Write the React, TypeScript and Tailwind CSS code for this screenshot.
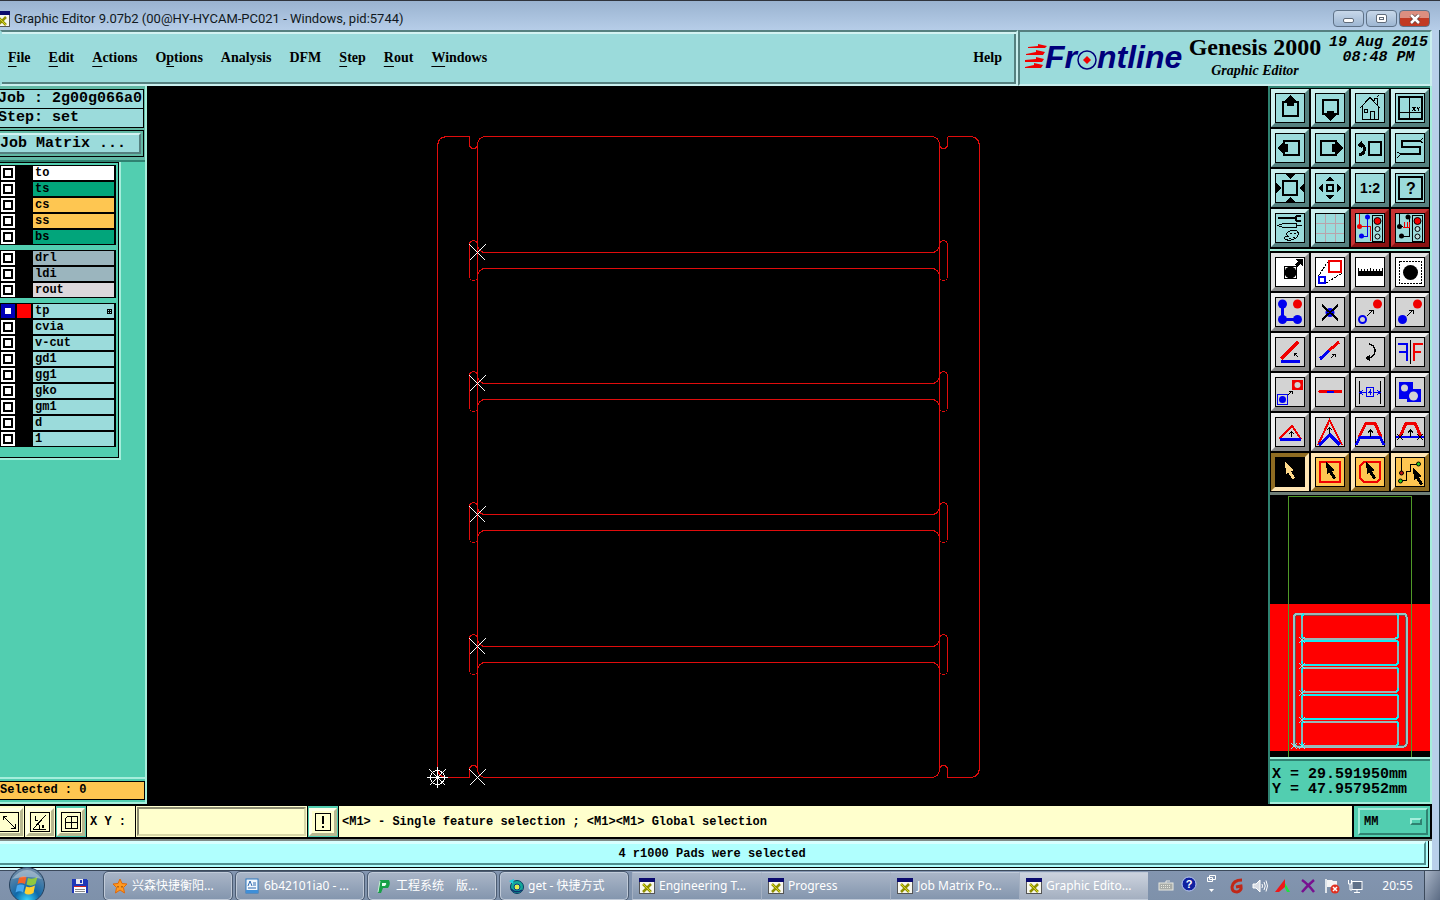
import React from 'react'

type Kids = { children?: React.ReactNode }

const BLUE = '#0000f0'
const RED = '#f00000'

/* ---------- tool icons, drawn on a 30 x 30 grid ---------- */

function Cursor({ x = 0, y = 0, fill = '#000' }: { x?: number; y?: number; fill?: string }) {
  return (
    <polygon
      transform={`translate(${x} ${y})`}
      points="10,5 11,17 13,15 17,22 20,21 16,14 19,13"
      fill={fill}
    />
  )
}

function ArrowUp() {
  return <path d="M15.500 20V13M13 15.500L15.500 13L18 15.500" stroke="#000" fill="none" />
}

function SmallArrow({ x, y }: { x: number; y: number }) {
  return <path transform={`translate(${x} ${y})`} d="M0 6L6 0M2 0H6V4" stroke="#000" fill="none" />
}

function TrafficLight() {
  return (
    <>
      <rect x="17.500" y="2.500" width="10" height="26" fill="none" stroke="#000" />
      <circle cx="22.500" cy="8" r="3.500" fill={RED} stroke="#000" />
      <circle cx="22.500" cy="16" r="2.500" fill="#b9dcdc" stroke="#000" />
      <circle cx="22.500" cy="23.500" r="2.500" fill="#b9dcdc" stroke="#000" />
    </>
  )
}

const viewTools: { label: string; alert?: boolean; icon: React.ReactNode }[] = [
  {
    label: 'Pan up',
    icon: (
      <>
        <rect x="8" y="9" width="15" height="14" fill="none" stroke="#000" strokeWidth="2" />
        <path d="M15.500 2L21 8H19V13H12V8H10Z" />
      </>
    ),
  },
  {
    label: 'Pan down',
    icon: (
      <>
        <rect x="8" y="7" width="15" height="14" fill="none" stroke="#000" strokeWidth="2" />
        <path d="M15.500 28L21 22H19V18H12V22H10Z" />
      </>
    ),
  },
  {
    label: 'Home',
    icon: (
      <path
        d="M5 15L15 4.500L25 15M7.500 13V26.500H23.500V13M9.500 16.500H12.500V19.500H9.500ZM15.500 26V18.500H19.500V26M19.500 8V5.500H22.500V12M22 4L24 2"
        fill="none"
        stroke="#000"
      />
    ),
  },
  {
    label: 'Coordinates view',
    icon: (
      <>
        <rect x="4" y="4" width="23" height="22" fill="none" stroke="#000" strokeWidth="2" />
        <path d="M14.500 4V26M4 19.500H27" stroke="#000" />
        <path d="M17.500 14L20.500 18M20.500 14L17.500 18M22 14L23.500 16L25 14M23.500 16V18" stroke="#000" fill="none" />
      </>
    ),
  },
  {
    label: 'Pan left',
    icon: (
      <>
        <rect x="9" y="8" width="15" height="14" fill="none" stroke="#000" strokeWidth="2" />
        <path d="M2 15L8 9V11H13V19H8V21Z" />
      </>
    ),
  },
  {
    label: 'Pan right',
    icon: (
      <>
        <rect x="6" y="8" width="15" height="14" fill="none" stroke="#000" strokeWidth="2" />
        <path d="M28 15L22 9V11H17V19H22V21Z" />
      </>
    ),
  },
  {
    label: 'Previous view',
    icon: (
      <>
        <rect x="14" y="9" width="12" height="13" fill="none" stroke="#000" strokeWidth="2" />
        <path d="M4 21H7Q10 19 9 14Q8 11 5 12" fill="none" stroke="#000" strokeWidth="3" />
        <path d="M2 12L7 7V15Z" />
      </>
    ),
  },
  {
    label: 'Snake view',
    icon: (
      <>
        <path d="M25 8H7V14H25V21H6" fill="none" stroke="#000" strokeWidth="2" />
        <path d="M25 8L28 5M25 8L28 10M6 21L2 19M6 21L2 25" stroke="#000" />
      </>
    ),
  },
  {
    label: 'Zoom in',
    icon: (
      <>
        <rect x="8" y="8" width="14" height="14" fill="none" stroke="#000" strokeWidth="2" />
        <path d="M10 1H20L15 6ZM10 29H20L15 24ZM1 10V20L6 15ZM29 10V20L24 15Z" />
      </>
    ),
  },
  {
    label: 'Zoom out',
    icon: (
      <>
        <rect x="12" y="12" width="6" height="6" fill="none" stroke="#000" strokeWidth="2" />
        <path d="M10 8H20L15 4ZM10 22H20L15 26ZM8 10V20L4 15ZM22 10V20L26 15Z" />
      </>
    ),
  },
  {
    label: 'Scale one to two',
    icon: (
      <text x="15" y="20" textAnchor="middle" fontSize="14" fontWeight="bold" fontFamily="Liberation Sans, sans-serif">
        1:2
      </text>
    ),
  },
  {
    label: 'Query',
    icon: (
      <>
        <rect x="4" y="4" width="23" height="22" fill="none" stroke="#000" strokeWidth="2" />
        <text x="16" y="21" textAnchor="middle" fontSize="16" fontWeight="bold" fontFamily="Liberation Sans, sans-serif">
          ?
        </text>
      </>
    ),
  },
  {
    label: 'Options',
    icon: (
      <>
        <path d="M3 5H20" stroke="#000" strokeWidth="2" />
        <path d="M26 3H22L20 5L22 8H26" fill="none" stroke="#000" strokeWidth="2" />
        <path d="M3 12.500L8 10.500H21V14.500H8ZM21 12.500H27" fill="none" stroke="#000" />
        <path d="M11 21Q15 16 22 18Q25 21 21 25Q15 29 10 26Q9 23 13 23Z" fill="none" stroke="#000" />
        <path d="M15 20.500H17M19 20.500H21M18 24.500H20M14 25.500H16" stroke="#000" />
      </>
    ),
  },
  {
    label: 'Grid',
    icon: <path d="M10.500 1V29M20.500 1V29M1 10.500H29M1 20.500H29" stroke="#b9a3ab" />,
  },
  {
    label: 'Net reference',
    alert: true,
    icon: (
      <>
        <path d="M4.500 1V13.500H15.500V28" fill="none" stroke={RED} />
        <path d="M12.500 4V23H6" fill="none" stroke={BLUE} />
        <circle cx="4.500" cy="13.500" r="2.500" fill={RED} />
        <circle cx="12.500" cy="4" r="2.500" fill={BLUE} />
        <circle cx="6.500" cy="23" r="2.500" fill={BLUE} />
        <TrafficLight />
      </>
    ),
  },
  {
    label: 'Net compare',
    alert: true,
    icon: (
      <>
        <path d="M4.500 1V13M14.500 4V23H7M4.500 13H8" fill="none" stroke="#000" />
        <path d="M8 14H15M9.500 9V14M12.500 9V14M14.500 9V14" stroke={RED} />
        <circle cx="4.500" cy="13.500" r="2.500" />
        <circle cx="13" cy="4" r="2.500" />
        <circle cx="6.500" cy="23" r="2.500" />
        <TrafficLight />
      </>
    ),
  },
]

const editTools: { label: string; tone: 'white' | 'gray' | 'orange' | 'active'; icon: React.ReactNode }[] = [
  {
    label: 'Select feature',
    tone: 'white',
    icon: (
      <>
        <rect x="9.500" y="9.500" width="12" height="12" fill="none" stroke="#000" />
        <circle cx="15.500" cy="15.500" r="6" />
        <path d="M21 9L25 5" stroke="#000" strokeWidth="3" />
        <path d="M20 2H28V9Z" />
      </>
    ),
  },
  {
    label: 'Transform feature',
    tone: 'white',
    icon: (
      <>
        <path d="M3.500 19L14 3M11 26L27 16" stroke="#000" strokeDasharray="2 1" />
        <rect x="14" y="4" width="12" height="11" fill="none" stroke={RED} strokeWidth="2" />
        <rect x="4" y="20" width="6" height="6" fill="none" stroke={BLUE} strokeWidth="2" />
      </>
    ),
  },
  {
    label: 'Measure',
    tone: 'white',
    icon: (
      <>
        <rect x="3" y="14" width="25" height="5" />
        <path d="M3.500 11V15M6.500 12V15M9.500 12V15M12.500 12V15M15.500 11V15M18.500 12V15M21.500 12V15M24.500 12V15M27.500 11V15" stroke="#000" />
      </>
    ),
  },
  {
    label: 'Select in area',
    tone: 'white',
    icon: (
      <>
        <rect x="4.500" y="4.500" width="22" height="22" fill="none" stroke="#000" strokeDasharray="2 1" />
        <circle cx="15.500" cy="15.500" r="7.500" />
      </>
    ),
  },
  {
    label: 'Connect',
    tone: 'gray',
    icon: (
      <>
        <path d="M7.500 7V22.500H22" fill="none" stroke={BLUE} strokeWidth="3" />
        <circle cx="7.500" cy="7" r="4.500" fill={BLUE} />
        <circle cx="7.500" cy="22.500" r="4.500" fill={BLUE} />
        <circle cx="22.500" cy="22.500" r="4.500" fill={BLUE} />
        <circle cx="22.500" cy="7" r="4.500" fill={RED} />
      </>
    ),
  },
  {
    label: 'Delete',
    tone: 'gray',
    icon: (
      <>
        <circle cx="15" cy="15.500" r="4.500" fill={BLUE} />
        <path d="M7 8L23 23M23 8L7 23" stroke="#000" strokeWidth="2" />
      </>
    ),
  },
  {
    label: 'Copy',
    tone: 'gray',
    icon: (
      <>
        <circle cx="7.500" cy="22.500" r="3.500" fill="none" stroke={BLUE} strokeWidth="2" />
        <circle cx="22.500" cy="7" r="4.500" fill={RED} />
        <SmallArrow x={12} y={13} />
      </>
    ),
  },
  {
    label: 'Move',
    tone: 'gray',
    icon: (
      <>
        <circle cx="7.500" cy="22.500" r="4.500" fill={BLUE} />
        <circle cx="22.500" cy="7" r="4.500" fill={RED} />
        <SmallArrow x={12} y={13} />
      </>
    ),
  },
  {
    label: 'Rotate',
    tone: 'gray',
    icon: (
      <>
        <path d="M23 5L6 22" stroke={RED} strokeWidth="3" />
        <path d="M6 24.500H25" stroke={BLUE} strokeWidth="3" />
        <path d="M23 20L19 16M19 19V16H22" stroke="#000" fill="none" />
      </>
    ),
  },
  {
    label: 'Stretch line',
    tone: 'gray',
    icon: (
      <>
        <path d="M5 22L14 13.500" stroke={BLUE} strokeWidth="3" />
        <path d="M14 13.500L24 5" stroke={RED} strokeWidth="3" />
        <path d="M16 21L20 17M17 17H20V20" stroke="#000" fill="none" />
      </>
    ),
  },
  {
    label: 'Turn',
    tone: 'gray',
    icon: (
      <>
        <path d="M14 7Q20 8 20 14Q20 20 13 21" fill="none" stroke="#000" strokeWidth="1.500" />
        <path d="M10 21L15 18V24Z" />
      </>
    ),
  },
  {
    label: 'Mirror',
    tone: 'gray',
    icon: (
      <>
        <path d="M3 7H12V24M4 15H12" fill="none" stroke={BLUE} strokeWidth="2" />
        <path d="M28 7H19V24M26 15H19" fill="none" stroke={RED} strokeWidth="2" />
        <path d="M15.500 3V27" stroke="#000" />
      </>
    ),
  },
  {
    label: 'Copy to layer',
    tone: 'gray',
    icon: (
      <>
        <rect x="17" y="3" width="11" height="10" fill={RED} />
        <circle cx="22.500" cy="8" r="3" fill="#d3d3d3" />
        <rect x="2.500" y="17.500" width="10" height="10" fill="none" stroke={BLUE} />
        <circle cx="7.500" cy="22.500" r="3.500" fill={BLUE} />
        <path d="M13 18L17 14M14 14H17V17" stroke="#000" fill="none" />
      </>
    ),
  },
  {
    label: 'Split line',
    tone: 'gray',
    icon: (
      <>
        <path d="M5 14.500H26" stroke={RED} strokeWidth="3" strokeLinecap="round" />
        <path d="M12 14.500H19" stroke={BLUE} strokeWidth="2" />
      </>
    ),
  },
  {
    label: 'Spacing',
    tone: 'gray',
    icon: (
      <>
        <path d="M4.500 4V27M25.500 4V27" stroke="#000" />
        <rect x="11.500" y="10.500" width="7" height="9" fill="none" stroke={BLUE} />
        <path d="M5 15.500H11M19 15.500H25M8 13L5 15.500L8 18M22 13L25 15.500L22 18M16 12L14 15.500H17M15.500 14V18" fill="none" stroke={BLUE} />
      </>
    ),
  },
  {
    label: 'Merge shapes',
    tone: 'gray',
    icon: (
      <>
        <rect x="4" y="5" width="14" height="17" fill={BLUE} />
        <rect x="12" y="12" width="14" height="13" fill={BLUE} />
        <circle cx="9.500" cy="11" r="3.500" fill="#d3d3d3" />
        <circle cx="18.500" cy="19" r="4.500" fill="#d3d3d3" />
      </>
    ),
  },
  {
    label: 'Raise corner',
    tone: 'gray',
    icon: (
      <>
        <path d="M4 22L17 9L26 22" fill="none" stroke={RED} strokeWidth="2" />
        <path d="M5 22.500H26" stroke={BLUE} strokeWidth="3" />
        <path d="M16.500 20V15M14 17L16.500 15L19 17" stroke="#000" fill="none" />
      </>
    ),
  },
  {
    label: 'Stretch corner',
    tone: 'gray',
    icon: (
      <>
        <path d="M3 28L14.500 3L27 28" fill="none" stroke={RED} strokeWidth="2" />
        <path d="M4 28L15 18L25 28" fill="none" stroke={BLUE} strokeWidth="3" />
        <path d="M14.500 17V11M12 13L14.500 11L17 13" stroke="#000" fill="none" />
      </>
    ),
  },
  {
    label: 'Raise segment',
    tone: 'gray',
    icon: (
      <>
        <path d="M4 20L11 6H20L26 20" fill="none" stroke={RED} strokeWidth="3" />
        <path d="M1 28L5 20H25L29 28" fill="none" stroke={BLUE} strokeWidth="3" />
        <ArrowUp />
      </>
    ),
  },
  {
    label: 'Move segment',
    tone: 'gray',
    icon: (
      <>
        <path d="M5 20L11 6H20L26 20" fill="none" stroke={RED} strokeWidth="3" />
        <path d="M1 20H29" stroke={BLUE} strokeWidth="2" />
        <path d="M2 17L8 23M8 17L2 23M22 17L28 23M28 17L22 23" stroke="#000" />
        <ArrowUp />
      </>
    ),
  },
  { label: 'Pointer', tone: 'active', icon: <Cursor fill="#ffd98a" /> },
  {
    label: 'Rectangle select',
    tone: 'orange',
    icon: (
      <>
        <rect x="5" y="5" width="20" height="20" fill="none" stroke={RED} strokeWidth="2" />
        <Cursor x={1} />
      </>
    ),
  },
  {
    label: 'Polygon select',
    tone: 'orange',
    icon: (
      <>
        <path d="M9 5H25V22L22 25H9L5 21V9Z" fill="none" stroke={RED} strokeWidth="2" />
        <Cursor x={1} />
      </>
    ),
  },
  {
    label: 'Net select',
    tone: 'orange',
    icon: (
      <>
        <path d="M6.500 0V16M23 7.500H15.500V14.500H11.500V23.500H5" fill="none" stroke="#000" />
        <circle cx="6.500" cy="16" r="2" fill="#c01010" stroke="#000" />
        <circle cx="23.500" cy="7" r="2" fill="#20d020" stroke="#000" />
        <circle cx="5.500" cy="24" r="2" fill="#20d020" stroke="#000" />
        <Cursor x={8} y={6} />
      </>
    ),
  },
]

const toneClass = {
  white: 'bg-white border-t-[#e4e4e4] border-l-[#e4e4e4] border-b-[#8c8c8c] border-r-[#8c8c8c]',
  gray: 'bg-[#d3d3d3] border-t-[#f0f0f0] border-l-[#f0f0f0] border-b-[#8a8a8a] border-r-[#8a8a8a]',
  orange: 'bg-[#fec651] border-t-[#ffe6b4] border-l-[#ffe6b4] border-b-[#8f6c22] border-r-[#8f6c22]',
  active: 'bg-black border-t-[#8f6c22] border-l-[#8f6c22] border-b-[#ffe6b4] border-r-[#ffe6b4]',
}

function ToolButton({ label, tone, framed = true, children }: Kids & { label: string; tone: string; framed?: boolean }) {
  return (
    <button type="button" aria-label={label} title={label} className={`size-[38px] border-4 ${tone}`}>
      <svg viewBox="0 0 30 30" className="block size-[30px] [&_circle]:[shape-rendering:auto]" shapeRendering="crispEdges">
        {framed && <rect x="0.500" y="0.500" width="29" height="29" fill="none" stroke="#000" />}
        {children}
      </svg>
    </button>
  )
}

/* ---------- window chrome ---------- */

function XIcon({ className }: { className: string }) {
  return (
    <svg viewBox="0 0 16 16" className={className}>
      <rect x="0.500" y="0.500" width="15" height="15" fill="#f7f7ee" stroke="#555" />
      <rect x="0" y="0" width="16" height="4" fill="#0a0a6e" />
      <path d="M4 6L12 14M12 6L4 14" stroke="#8f8f00" strokeWidth="2.500" />
      <path d="M4 6L12 14" stroke="#d8d820" strokeWidth="1" />
    </svg>
  )
}

function TitleBar() {
  const base = 'flex h-[17px] w-[31px] items-center justify-center rounded-sm border border-[#5f7288]'
  return (
    <div className="flex h-[30px] shrink-0 items-start justify-between border-t border-[#30343c] bg-linear-to-b from-[#9ab3d0] to-[#b6cde8]">
      <div className="flex items-center pt-2">
        <XIcon className="-ml-1.5 size-4" />
        <span className="ml-1 font-['Roboto','Noto_Sans',sans-serif] text-[13px] leading-5 text-[#101820]">
          Graphic Editor 9.07b2 (00@HY-HYCAM-PC021 - Windows, pid:5744)
        </span>
      </div>
      <div className="flex gap-0.5 pt-[9px] pr-[10px]">
        <button type="button" aria-label="Minimize" className={`${base} bg-linear-to-b from-[#c8d8ea] to-[#9db6d2]`}>
          <span className="mt-1 h-[5px] w-[11px] rounded-xs border border-[#5f6b7a] bg-white" />
        </button>
        <button type="button" aria-label="Maximize" className={`${base} bg-linear-to-b from-[#c8d8ea] to-[#9db6d2]`}>
          <span className="flex h-[9px] w-[11px] items-center justify-center rounded-xs border border-[#5f6b7a] bg-white">
            <span className="h-[3px] w-[5px] border border-[#5f6b7a]" />
          </span>
        </button>
        <button type="button" aria-label="Close" className={`${base} border-[#5a1d18] bg-linear-to-b from-[#dc8f80] from-45% to-[#c13a24] to-50%`}>
          <svg viewBox="0 0 12 10" className="h-[10px] w-3">
            <path d="M2 1L10 9M10 1L2 9" stroke="#60403c" strokeWidth="4" />
            <path d="M2 1L10 9M10 1L2 9" stroke="#fff" strokeWidth="2.500" />
          </svg>
        </button>
      </div>
    </div>
  )
}

const menus: [string, string, string][] = [
  ['', 'F', 'ile'],
  ['', 'E', 'dit'],
  ['', 'A', 'ctions'],
  ['O', 'p', 'tions'],
  ['Analysis', '', ''],
  ['DFM', '', ''],
  ['', 'S', 'tep'],
  ['', 'R', 'out'],
  ['', 'W', 'indows'],
]

function Logo() {
  return (
    <svg viewBox="0 -7 164 44" className="h-11 w-[164px]" role="img" aria-label="Frontline">
      <g fill="#f00000">
        <path d="M4 4L14 3V1L23 3L21 5H4Z" />
        <path d="M2 11L12 9V7L21 9L19 12H2Z" />
        <path d="M1 17L12 16V14L20 16L18 19H1Z" />
        <path d="M1 24L10 22V20L19 22L17 25H1Z" />
      </g>
      <g fill="#00007b" fontFamily="Liberation Sans, sans-serif" fontWeight="bold" fontStyle="italic" fontSize="32">
        <text x="21" y="25">Fr</text>
        <text x="73" y="25">ntline</text>
      </g>
      <circle cx="63" cy="17" r="9" fill="none" stroke="#00007b" strokeWidth="1.500" />
      <path d="M63 13L67 17L63 21L59 17Z" fill="#f00000" />
    </svg>
  )
}

function Header() {
  return (
    <header className="flex h-14 shrink-0 font-['Liberation_Serif',serif] text-black">
      <nav className="flex flex-1 items-center justify-between border-2 border-t-[#55807f] border-r-[#c9efee] border-b-[#c9efee] border-l-[#9bdbdb] bg-[#9bdbdb] pb-0.5 shadow-[inset_0_2px_0_#d3f2f1,inset_-2px_-2px_0_#55807f]">
        <ul className="flex gap-[18px] pl-1.5 text-[14px] font-bold">
          {menus.map(([a, b, c]) => (
            <li key={a + b + c}>
              <button type="button">
                {a}
                {b && <span className="underline decoration-1 underline-offset-4">{b}</span>}
                {c}
              </button>
            </li>
          ))}
        </ul>
        <button type="button" className="pr-3.5 text-[14px] font-bold">Help</button>
      </nav>
      <div className="flex w-[414px] items-start border-2 border-t-[#55807f] border-r-[#c9efee] border-b-[#c9efee] border-l-[#55807f] bg-[#9bdbdb] pl-1">
        <div className="w-40 shrink-0 pt-1">
          <Logo />
        </div>
        <div className="w-[142px] shrink-0 pt-px text-center">
          <h1 className="text-[24px] leading-7 font-bold whitespace-nowrap">Genesis 2000</h1>
          <p className="text-[14px] leading-5 font-bold italic">Graphic Editor</p>
        </div>
        <p className="pt-[3px] pl-[3px] text-center font-['Liberation_Mono',monospace] text-[15px] leading-[15px] font-bold whitespace-nowrap italic">
          19 Aug 2015
          <br />
          08:48 PM
        </p>
      </div>
    </header>
  )
}

/* ---------- layer list ---------- */

type Layer = { name: string; color: string; active?: boolean }

const layerGroups: Layer[][] = [
  [
    { name: 'to', color: 'bg-white' },
    { name: 'ts', color: 'bg-[#02a57b]' },
    { name: 'cs', color: 'bg-[#fec651]' },
    { name: 'ss', color: 'bg-[#fec651]' },
    { name: 'bs', color: 'bg-[#02a57b]' },
  ],
  [
    { name: 'drl', color: 'bg-[#9bb5be]' },
    { name: 'ldi', color: 'bg-[#9bb5be]' },
    { name: 'rout', color: 'bg-[#dcd8dc]' },
  ],
  [
    { name: 'tp', color: 'bg-[#9bdbdb]', active: true },
    ...['cvia', 'v-cut', 'gd1', 'gg1', 'gko', 'gm1', 'd', '1'].map((name) => ({ name, color: 'bg-[#9bdbdb]' })),
  ],
]

function LayerRow({ name, color, active }: Layer) {
  return (
    <li className="flex h-4 items-center gap-0.5 pr-0.5 pl-px">
      <input
        type="checkbox"
        id={`layer-${name}`}
        defaultChecked={active}
        className={`size-[14px] shrink-0 appearance-none border-2 bg-white ${
          active ? 'border-[#0000b8] shadow-[inset_0_0_0_2px_#0000b8]' : 'border-white shadow-[inset_0_0_0_2px_#000]'
        }`}
      />
      <span className={`size-[14px] shrink-0 ${active ? 'bg-[#ff0000]' : 'bg-black'}`} />
      <label htmlFor={`layer-${name}`} className={`flex h-[14px] flex-1 items-center justify-between pr-0.5 pl-0.5 leading-[14px] ${color}`}>
        {name}
        {active && (
          <svg viewBox="0 0 5 5" className="size-[5px]" shapeRendering="crispEdges">
            <path d="M0.500 0.500H4.500V4.500H0.500ZM2.500 0V5M0 2.500H5" fill="none" stroke="#000" />
          </svg>
        )}
      </label>
    </li>
  )
}

function LeftPanel() {
  return (
    <aside className="flex w-[147px] shrink-0 flex-col border-r-2 border-[#a5eedb] bg-[#52ceb0] font-['Liberation_Mono',monospace] font-bold text-black">
      <div className="bg-[#62b8a4] pt-[3px] pr-px pb-[3px]">
        <div className="border-y border-r border-black bg-[#9bdbdb] text-[15px] leading-[18px] whitespace-pre">
          <p className="-ml-0.5 border-b border-black">Job : 2g00g066a0</p>
          <p className="-ml-0.5">Step: set</p>
        </div>
        <div className="mt-0.5 border-y border-r border-black p-0.5 pl-0">
          <button
            type="button"
            className="block w-full border-y-2 border-r-2 border-t-[#d3f2f1] border-r-[#55807f] border-b-[#55807f] bg-[#9bdbdb] text-left text-[15px] leading-[17px]"
          >
            Job Matrix ...
          </button>
        </div>
      </div>
      <div className="h-0.5 bg-[#2f8271]" />
      <div className="w-[121px] border-r-2 border-b-2 border-[#a5eedb]">
        <div className="flex flex-col gap-[5px] border-t border-r border-b border-black pt-0.5 pr-0.5 pb-2.5">
          {layerGroups.map((group) => (
            <ul key={group[0].name} className="bg-black text-[12px]">
              {group.map((layer) => (
                <LayerRow key={layer.name} {...layer} />
              ))}
            </ul>
          ))}
        </div>
      </div>
      <div className="mt-auto border-t-2 border-b-2 border-[#a5eedb] bg-[#52ceb0] py-0.5">
        <p className="border-y border-r border-black bg-[#fec651] text-[12px] leading-[17px] whitespace-pre">Selected : 0</p>
      </div>
    </aside>
  )
}

/* ---------- drawing canvas ---------- */

const rails = [252.5, 383.5, 514.5, 646.5]
const markers = [252.5, 383.5, 514.5, 646.5, 777.5]

function BoardCanvas() {
  return (
    <div className="min-w-0 flex-1 bg-black">
      <svg viewBox="147 86 1121 718" className="block size-full" shapeRendering="crispEdges" role="img" aria-label="Panel outline">
        <g fill="none" stroke="#e00c0c">
          <path d="M469.500 136.500H448Q437.500 136.500 437.500 147V767Q437.500 777.500 448 777.500H469.500" />
          <path d="M947.500 136.500H969Q979.500 136.500 979.500 147V767Q979.500 777.500 969 777.500H947.500" />
          <path d="M469.500 136.500V144Q469.500 148.500 473.500 148.500Q477.500 148.500 477.500 144Q478 137 486 136.500H931Q939 137 939.500 144Q939.500 148.500 943.500 148.500Q947.500 148.500 947.500 144V136.500" />
          <path d="M469.500 777.500V770Q469.500 765.500 473.500 765.500Q477.500 765.500 477.500 770Q478 777 486 777.500H931Q939 777 939.500 770Q939.500 765.500 943.500 765.500Q947.500 765.500 947.500 770V777.500" />
          <path d="M477.500 144V770M939.500 144V770" />
          {rails.map((y) => (
            <g key={y}>
              <path d={`M477.5 ${y - 8}Q478 ${y} 486 ${y}H931Q939 ${y} 939.5 ${y - 8}`} />
              <path d={`M477.5 ${y + 24}Q478 ${y + 16} 486 ${y + 16}H931Q939 ${y + 16} 939.5 ${y + 24}`} />
              <rect x="469.500" y={y - 12} width="8" height="40" rx="4" />
              <rect x="939.500" y={y - 12} width="8" height="40" rx="4" />
            </g>
          ))}
        </g>
        <g fill="none" stroke="#fff">
          {markers.map((y) => (
            <path key={y} d={`M469.5 ${y - 8}L485.5 ${y + 8}M485.5 ${y - 8}L469.5 ${y + 8}`} />
          ))}
          <path d="M427 777.500H448M437.500 767V788M429.500 769.500L445.500 785.500M445.500 769.500L429.500 785.500" />
          <circle cx="437.500" cy="777.500" r="7" />
        </g>
      </svg>
    </div>
  )
}

/* ---------- right column ---------- */

const mapCells = [119, 145.5, 172.5, 199.5, 226.5]

function MiniMap() {
  return (
    <svg viewBox="0 0 160 262" preserveAspectRatio="none" className="block h-full w-full bg-black" role="img" aria-label="Overview">
      <rect x="0" y="109" width="160" height="147" fill="#ff0000" />
      <path d="M18.500 262V1.500H141.500V262" fill="none" stroke="#4f9a28" strokeWidth="1" shapeRendering="crispEdges" />
      <g fill="none" shapeRendering="crispEdges">
        <rect x="24" y="119" width="112.500" height="132.500" rx="3" stroke="#7a4a4a" strokeWidth="3" />
        <rect x="24" y="119" width="112.500" height="132.500" rx="3" stroke="#8fc8c8" strokeWidth="2" />
        {mapCells.map((y) => (
          <rect key={y} x="32" y={y} width="96" height="24.500" rx="3" stroke="#18e8f0" strokeWidth="2" />
        ))}
        {mapCells.map((y) => (
          <path key={y} d={`M32 ${y + 5}V${y + 20}M128 ${y + 5}V${y + 20}`} stroke="#8fb4b4" strokeWidth="2" />
        ))}
        <path d="M34 119H126M34 143.500H126M34 172.500H126M34 197H126M34 226.500H126M34 251H126" stroke="#9ab8b8" strokeWidth="2" />
        {[145, 171, 198, 225, 251].map((y) => (
          <path key={y} d={`M29 ${y - 3}L35 ${y + 3}M35 ${y - 3}L29 ${y + 3}`} stroke="#7fe8f0" />
        ))}
        <path d="M21 248L27 254M27 248L21 254" stroke="#7fe8f0" />
      </g>
    </svg>
  )
}

function RightPanel() {
  return (
    <aside className="flex w-[164px] shrink-0 flex-col border-r-2 border-l-2 border-r-[#a5eedb] border-l-[#2f8271] bg-black">
      <div className="grid grid-cols-4 gap-0.5 border-t-2 border-[#2f8271] px-px pt-px pb-0.5">
        {viewTools.map(({ label, alert, icon }) => (
          <ToolButton
            key={label}
            label={label}
            tone={
              alert
                ? 'bg-[#9bdbdb] border-t-[#c83434] border-l-[#c83434] border-b-[#8a1212] border-r-[#8a1212]'
                : 'bg-[#9bdbdb] border-t-[#cdf0ef] border-l-[#cdf0ef] border-b-[#55807f] border-r-[#55807f]'
            }
          >
            {icon}
          </ToolButton>
        ))}
      </div>
      <div className="grid grid-cols-4 gap-0.5 border-t-2 border-[#a5eedb] px-px pt-0.5 pb-px">
        {editTools.map(({ label, tone, icon }) => (
          <ToolButton key={label} label={label} tone={toneClass[tone]} framed={tone !== 'active'}>
            {icon}
          </ToolButton>
        ))}
      </div>
      <div className="h-[3px] bg-[#6f7f78]" />
      <div className="min-h-0 flex-1 basis-0">
        <MiniMap />
      </div>
      <div className="border-t-2 border-b-2 border-t-[#a5eedb] border-b-[#a5eedb]">
        <div className="border-t-2 border-[#2f8271] bg-[#52ceb0] pt-1.5 pb-[5px] pl-0.5 font-['Liberation_Mono',monospace] text-[15px] leading-[15px] font-bold whitespace-pre">
          <p>X = 29.591950mm</p>
          <p>Y = 47.957952mm</p>
        </div>
      </div>
    </aside>
  )
}

/* ---------- bottom bars ---------- */

function CommandIcon({ label, children, snap }: Kids & { label: string; snap?: boolean }) {
  return (
    <div className={`flex shrink-0 items-center border-r border-black ${snap ? 'bg-[#52ceb0] px-px' : 'bg-[#ffffcd] px-px'}`}>
      <button
        type="button"
        aria-label={label}
        className="size-[28px] border-3 border-t-[#ffffe8] border-r-[#b8b890] border-b-[#b8b890] border-l-[#ffffe8] bg-[#ffffcd]"
      >
        <svg viewBox="0 0 20 20" className="mx-auto block size-5" shapeRendering="crispEdges" fill="none" stroke="#000">
          <rect x="0.500" y="0.500" width="19" height="19" />
          {children}
        </svg>
      </button>
    </div>
  )
}

function CommandBar() {
  return (
    <div className="flex h-[35px] shrink-0 overflow-hidden border-y-2 border-black bg-[#ffffcd] font-['Liberation_Mono',monospace] text-[12px] font-bold text-black">
      <div className="-ml-1.5 flex">
        <CommandIcon label="Free angle">
          <path d="M4 4L16 16M4 8V4H8M12 16H16V12" />
        </CommandIcon>
        <CommandIcon label="Measure angle">
          <path d="M3 17H16M3 17L16 3M5 4V8H8M10 17Q10 13 8 12M12 13L14 16M14 13L12 16" />
        </CommandIcon>
        <CommandIcon label="Snap to grid" snap>
          <path d="M4 7L7 4H16V16H4ZM4 10H16M10 4V16" />
        </CommandIcon>
      </div>
      <label htmlFor="xy" className="flex w-12 shrink-0 items-center pl-[3px] whitespace-pre">
        X Y :
      </label>
      <div className="w-[173px] shrink-0 border-x border-black bg-[#ffffcd] p-px">
        <input
          id="xy"
          type="text"
          className="h-full w-full border-2 border-t-[#8c8c70] border-r-[#d8d8a8] border-b-[#d8d8a8] border-l-[#8c8c70] bg-[#ffffcd] px-1 outline-none"
        />
      </div>
      <div className="flex shrink-0 items-center border-r border-black bg-[#52ceb0] px-px">
        <button
          type="button"
          aria-label="Alert"
          className="size-[28px] border-3 border-t-[#ffffe8] border-r-[#b8b890] border-b-[#b8b890] border-l-[#ffffe8] bg-[#ffffcd]"
        >
          <svg viewBox="0 0 20 20" className="mx-auto block size-5" shapeRendering="crispEdges">
            <rect x="2.500" y="1.500" width="15" height="17" fill="none" stroke="#000" />
            <path d="M9 4H11V12H9ZM9 14H11V16H9Z" />
          </svg>
        </button>
      </div>
      <p className="flex min-w-0 flex-1 items-center pl-[3px] whitespace-pre">
        {'<M1> - Single feature selection ; <M1><M1> Global selection'}
      </p>
      <div className="relative w-20 shrink-0 border-x-2 border-black bg-[#52ceb0] p-0.5 pl-1">
        <select
          aria-label="Units"
          className="h-full w-full appearance-none border-2 border-t-[#a5eedb] border-r-[#2f8271] border-b-[#2f8271] border-l-[#a5eedb] bg-[#52ceb0] pl-1"
        >
          <option>MM</option>
          <option>INCH</option>
        </select>
        <span className="pointer-events-none absolute top-3 right-2 h-[7px] w-3 border-2 border-t-[#a5eedb] border-r-[#2f8271] border-b-[#2f8271] border-l-[#a5eedb]" />
      </div>
    </div>
  )
}

function StatusBar() {
  return (
    <div className="h-[31px] shrink-0 border-t-2 border-[#7f8c88] bg-[#e0ffff] pr-[3px]">
      <div className="h-[27px] border-r border-b border-black bg-[#b0fffe]">
        <p className="mr-0.5 flex h-[24px] items-center justify-center border-t-3 border-r-2 border-b-2 border-t-[#d8ffff] border-r-[#4f8f8e] border-b-[#4f8f8e] font-['Liberation_Mono',monospace] text-[12px] font-bold text-black">
          4 r1000 Pads were selected
        </p>
      </div>
    </div>
  )
}

/* ---------- taskbar ---------- */

function StarIcon() {
  return (
    <svg viewBox="0 0 16 16" className="size-4 shrink-0">
      <path d="M8 1L10 5.500L15 6L11.500 9.500L12.500 15L8 12L3.500 15L4.500 9.500L1 6L6 5.500Z" fill="#ff9a20" stroke="#e06808" />
      <path d="M6 8V9.500M10 8V9.500" stroke="#703000" />
    </svg>
  )
}

function DocIcon() {
  return (
    <svg viewBox="0 0 16 16" className="size-4 shrink-0">
      <rect x="2" y="1" width="12" height="14" fill="#f4f8fc" stroke="#2d78c0" />
      <rect x="2" y="12" width="12" height="3" fill="#3f8fd8" />
      <path d="M4 8L6 3L8 8M9 5H12M9 7H12M4 10H12" fill="none" stroke="#2d68b0" />
    </svg>
  )
}

function PIcon() {
  return (
    <svg viewBox="0 0 16 16" className="size-4 shrink-0">
      <path d="M4 2L13 2Q15 6 12 10L7 10L5 15L2 15Z" fill="#18a048" />
      <path d="M6 5H10Q11 6 9 8H6Z" fill="#e8fff0" />
      <path d="M2 14L4 3" stroke="#c8f0d4" />
    </svg>
  )
}

function GlobeIcon() {
  return (
    <svg viewBox="0 0 16 16" className="size-4 shrink-0">
      <circle cx="9" cy="9" r="6.500" fill="#12a89a" stroke="#0b3c60" />
      <circle cx="9" cy="9" r="3" fill="#e0f050" stroke="#0a3a8a" />
      <path d="M1 3L6 1L5 6Z" fill="#20d0e0" />
      <path d="M3 11Q8 16 14 12" fill="none" stroke="#103070" strokeWidth="1.500" />
    </svg>
  )
}

function StartOrb() {
  return (
    <svg viewBox="0 0 38 34" className="h-[34px] w-[38px]">
      <defs>
        <radialGradient id="orb" cx="50%" cy="95%" r="90%">
          <stop offset="0" stopColor="#38d8ff" />
          <stop offset="0.400" stopColor="#1068a8" />
          <stop offset="1" stopColor="#6f8ca8" />
        </radialGradient>
      </defs>
      <circle cx="19" cy="18" r="17.500" fill="url(#orb)" stroke="#26405c" />
      <path d="M11 11Q15 8 18.500 10L17 17Q13 15 9.500 17Z" fill="#f0642c" />
      <path d="M20 11Q24 13 29.500 10L27.500 17Q23 20 18.500 17.500Z" fill="#90c840" />
      <path d="M9 18.500Q13 16.500 16.500 18.500L15 25.500Q12 23 7.500 25.500Z" fill="#48a8f0" />
      <path d="M18 19.500Q22 21.500 27 18.500L25.500 26Q20 29 16.500 26Z" fill="#ffd030" />
      <path d="M4 12Q19 -6 34 12Q19 8 4 12Z" fill="#ffffff" opacity="0.350" />
    </svg>
  )
}

function TaskButton({ icon, text, joined, active }: { icon: React.ReactNode; text: string; joined?: boolean; active?: boolean }) {
  return (
    <button
      type="button"
      className={`flex h-[28px] items-center gap-1 overflow-hidden border border-[#c0cad8] text-left whitespace-nowrap ${
        joined ? 'w-[129px] border-r-0 border-l-[#a4b0c2] pl-1.5' : 'w-[128px] rounded-sm pl-[7px] outline outline-[#4c5c72]'
      } ${active ? 'bg-linear-to-b from-[#ccd3de] to-[#a4afc0]' : 'bg-linear-to-b from-[#a9b5c7] to-[#8496ae]'}`}
    >
      {icon}
      {text}
    </button>
  )
}

function Taskbar() {
  const x = <XIcon className="size-4 shrink-0" />
  return (
    <footer className="flex h-[30px] shrink-0 items-center border-t border-[#3c4a5c] bg-linear-to-b from-[#8395b0] to-[#7e91aa] font-['Noto_Sans','Noto_Sans_CJK_SC',sans-serif] text-[12px] text-white">
      <button type="button" aria-label="Start" className="-mt-1 ml-2">
        <StartOrb />
      </button>
      <button type="button" aria-label="Save" className="ml-[26px]">
        <svg viewBox="0 0 16 16" className="size-4" shapeRendering="crispEdges">
          <path d="M0 1H14L16 3V15H0Z" fill="#2038b8" />
          <rect x="4" y="1" width="7" height="5" fill="#e8e8f0" />
          <rect x="8" y="2" width="2" height="3" fill="#2038b8" />
          <rect x="2" y="8" width="12" height="7" fill="#fff" />
          <path d="M2 8.500H14" stroke="#d02020" />
          <path d="M3 11.500H13M3 13.500H13" stroke="#888" />
        </svg>
      </button>
      <div className="ml-4 flex gap-1">
        <TaskButton icon={<StarIcon />} text="兴森快捷衡阳..." />
        <TaskButton icon={<DocIcon />} text="6b42101ia0 - ..." />
        <TaskButton icon={<PIcon />} text="工程系统　版..." />
        <TaskButton icon={<GlobeIcon />} text="get - 快捷方式" />
        <div className="flex">
          <TaskButton icon={x} text="Engineering T..." joined />
          <TaskButton icon={x} text="Progress" joined />
          <TaskButton icon={x} text="Job Matrix Po..." joined />
          <TaskButton icon={x} text="Graphic Edito..." joined active />
        </div>
      </div>
      <div className="ml-auto flex h-full items-center gap-[7px]">
        <svg viewBox="0 0 16 16" className="size-4" fill="none" stroke="#e8e8e0">
          <rect x="1" y="5" width="14" height="7" fill="#a8aca8" />
          <path d="M3 7.500H13M3 9.500H13" strokeDasharray="1 1" />
          <path d="M8 5V3H12" />
        </svg>
        <svg viewBox="0 0 16 16" className="mb-1 size-4">
          <circle cx="8" cy="8" r="7" fill="#1020a0" stroke="#b8c8f0" />
          <text x="8" y="12" textAnchor="middle" fontSize="11" fontWeight="bold" fill="#fff" fontFamily="Liberation Sans, sans-serif">?</text>
        </svg>
        <svg viewBox="0 0 14 20" className="mb-1 h-5 w-3.5" fill="none" stroke="#fff">
          <path d="M5.500 1.500H11.500V5.500H5.500ZM3.500 3.500H8.500V7.500H3.500Z" />
          <path d="M5 15H10L7.500 18Z" fill="#fff" stroke="none" />
        </svg>
        <svg viewBox="0 0 16 16" className="ml-1 size-4" fill="none">
          <path d="M13 2Q4 2 3 9Q3 14 8 14Q13 13 12 8L7 9" stroke="#c02818" strokeWidth="3" />
        </svg>
        <svg viewBox="0 0 16 16" className="size-4" fill="none" stroke="#fff">
          <path d="M1 6H4L8 2V14L4 10H1Z" fill="#d8dce4" />
          <path d="M10 6Q11 8 10 10M12 4Q14.500 8 12 12M14 2.500Q17 8 14 13.500" />
        </svg>
        <svg viewBox="0 0 16 16" className="size-4">
          <path d="M0 14L10 1V9L4 14Z" fill="#f01818" />
          <path d="M10 5L15 14H12L10 10Z" fill="#20e040" />
        </svg>
        <svg viewBox="0 0 16 16" className="ml-0.5 size-4" fill="none" stroke="#781090" strokeWidth="2.500">
          <path d="M2 2Q8 6 14 14M14 2Q7 8 2 14" />
        </svg>
        <svg viewBox="0 0 16 16" className="ml-px size-4">
          <path d="M2 1V15" stroke="#fff" strokeWidth="1.500" />
          <path d="M3 2H8L9 3H13V9H3Z" fill="#f4f4f4" />
          <circle cx="11" cy="11" r="4.500" fill="#e03020" />
          <path d="M9 9L13 13M13 9L9 13" stroke="#fff" strokeWidth="1.500" />
        </svg>
        <svg viewBox="0 0 16 16" className="size-4" fill="none" stroke="#fff">
          <rect x="5" y="3.500" width="10" height="8" fill="#5f7088" />
          <path d="M7 14.500H13M10 12V14M1.500 2V6H4.500V2M3 6V12H5" />
        </svg>
        <span className="ml-3">20:55</span>
        <button type="button" aria-label="Show desktop" className="ml-1 h-full w-4 border-l border-[#3c4a5c] bg-linear-to-br from-[#a8b4c6] to-[#5c6c84]" />
      </div>
    </footer>
  )
}

export default function App() {
  return (
    <div className="flex min-h-screen flex-col overflow-x-hidden bg-black">
      <TitleBar />
      <div className="flex flex-1">
        <main className="flex min-w-0 flex-1 flex-col">
          <Header />
          <div className="flex flex-1">
            <LeftPanel />
            <BoardCanvas />
            <RightPanel />
          </div>
          <CommandBar />
          <StatusBar />
        </main>
        <div className="w-2 shrink-0 border-r border-[#2b4a5c] bg-[#b8d0ea]" />
      </div>
      <Taskbar />
    </div>
  )
}
